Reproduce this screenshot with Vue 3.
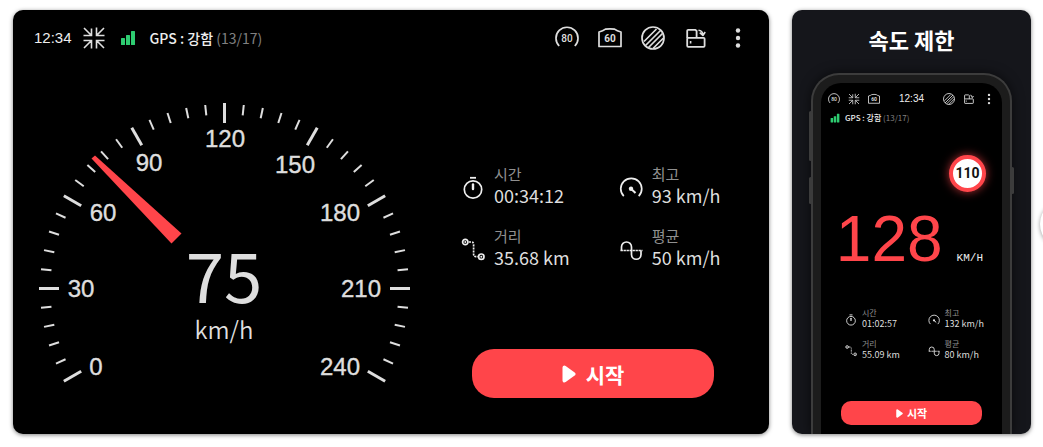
<script setup>
const majorTicks = Array.from({ length: 9 }, (_, i) => i * 30 - 120)
const minorTicks = Array.from({ length: 41 }, (_, i) => i * 6 - 120).filter((a) => a % 30 !== 0)

const gaugeLabels = [
  { value: 0, x: 96, y: 375 },
  { value: 30, x: 81, y: 297 },
  { value: 60, x: 103, y: 221 },
  { value: 90, x: 149, y: 171 },
  { value: 120, x: 225, y: 147 },
  { value: 150, x: 295, y: 173 },
  { value: 180, x: 340, y: 221 },
  { value: 210, x: 361, y: 297 },
  { value: 240, x: 340, y: 375 },
]

const landscapeStats = [
  { icon: 'timer', label: '시간', value: '00:34:12' },
  { icon: 'max', label: '최고', value: '93 km/h' },
  { icon: 'route', label: '거리', value: '35.68 km' },
  { icon: 'average', label: '평균', value: '50 km/h' },
]

const portraitStats = [
  { icon: 'timer', label: '시간', value: '01:02:57' },
  { icon: 'max', label: '최고', value: '132 km/h' },
  { icon: 'route', label: '거리', value: '55.09 km' },
  { icon: 'average', label: '평균', value: '80 km/h' },
]
</script>

<template>
  <main class="page">
    <svg class="sprite" aria-hidden="true">
      <symbol id="i-limit" viewBox="0 0 24 24">
        <path d="M4.2 20A11 11 0 1 1 19.8 20" fill="none" stroke="currentColor" stroke-width="1.7" />
      </symbol>
      <symbol id="i-camera" viewBox="0 0 24 24">
        <path d="M1 20.5V6Q5 5.2 7.5 3.2Q12 2.4 16.5 3.2Q19 5.2 23 6V20.5Z" fill="none" stroke="currentColor" stroke-width="1.7" stroke-linejoin="round" />
      </symbol>
      <symbol id="i-hatch" viewBox="0 0 24 24">
        <g fill="none" stroke="currentColor" stroke-width="1.7">
          <circle cx="12" cy="12" r="11" />
          <path d="M3 15.5L15.5 3M4 20L20 4M7.5 21.5L21.5 7.5M12 22.5L22.5 12" />
        </g>
      </symbol>
      <symbol id="i-rotate" viewBox="0 0 24 24">
        <g fill="none" stroke="currentColor" stroke-width="1.8" stroke-linejoin="round">
          <rect x="3.2" y="11.8" width="17.4" height="9" rx="1" />
          <path d="M3.2 12V4.8Q3.2 3.8 4.200 3.8H11.400L12.6 5V11.8" />
          <path d="M14.5 4.200Q18.4 4.600 18.900 8.600M15.800 6.600L18.900 9.500L21.200 6" stroke-width="1.6" />
          <path d="M6.600 15V17.500" stroke-width="1.6" />
        </g>
      </symbol>
      <symbol id="i-dots" viewBox="0 0 24 24">
        <g fill="currentColor">
          <circle cx="12" cy="3.8" r="2.4" />
          <circle cx="12" cy="12" r="2.4" />
          <circle cx="12" cy="20.2" r="2.4" />
        </g>
      </symbol>
      <symbol id="i-shrink" viewBox="0 0 24 24">
        <path d="M2 2L9 9M9.5 2.5V9.5H1.5M22 2L15 9M14.5 1.5V9.5H22.5M2 22L9 15M1.5 14.5H9.5V22.5M22 22L15 15M22.5 14.5H14.5V22.5" fill="none" stroke="currentColor" stroke-width="1.6" />
      </symbol>
      <symbol id="i-signal" viewBox="0 0 16 16">
        <g fill="#2ecc71">
          <rect x="1" y="8" width="4" height="7" rx=".5" />
          <rect x="6" y="5" width="4" height="10" rx=".5" />
          <rect x="11" y="1" width="4" height="14" rx=".5" />
        </g>
      </symbol>
      <symbol id="i-timer" viewBox="0 0 24 24">
        <g fill="none" stroke="currentColor">
          <circle cx="12" cy="13.5" r="8.7" stroke-width="1.7" />
          <path d="M9 1.8H15" stroke-width="1.8" />
          <path d="M12 8.5V13" stroke-width="2.4" stroke-linecap="round" />
        </g>
      </symbol>
      <symbol id="i-max" viewBox="0 0 24 24">
        <path d="M4.8 20.2A10.5 10.5 0 1 1 19.7 20.2" fill="none" stroke="currentColor" stroke-width="1.7" />
        <circle cx="12" cy="12.7" r="2.2" fill="currentColor" />
        <path d="M12 12.7L16.5 17" stroke="currentColor" stroke-width="2" />
      </symbol>
      <symbol id="i-route" viewBox="0 0 24 24">
        <g fill="none" stroke="currentColor" stroke-width="1.7">
          <circle cx="4.3" cy="4" r="2.7" />
          <circle cx="20.3" cy="18.700" r="2.7" />
          <path d="M8 4H10.3Q12.6 4 12.6 6.5V16Q12.6 18.700 15 18.700H17" stroke-dasharray="2 1" />
        </g>
        <circle cx="4.3" cy="4" r="1" fill="currentColor" />
        <circle cx="20.3" cy="18.700" r="1" fill="currentColor" />
      </symbol>
      <symbol id="i-average" viewBox="0 0 24 24">
        <g fill="none" stroke="currentColor" stroke-width="1.7">
          <path d="M2.500 12.5V9A5 5 0 0 1 12.5 9V16.500A4.700 4.700 0 0 0 22 16.500V12.5" />
          <path d="M1.500 12.5H23.500" stroke-dasharray="2.400 .6" />
        </g>
      </symbol>
      <symbol id="i-play" viewBox="0 0 14 18">
        <path d="M2.5 2.500L11.5 9L2.5 15.500Z" fill="currentColor" stroke="currentColor" stroke-width="4" stroke-linejoin="round" />
      </symbol>
    </svg>

    <section class="card landscape">
      <header class="bar">
        <span class="clock">12:34</span>
        <button class="tool shrink" type="button" aria-label="화면 축소"><svg><use href="#i-shrink" /></svg></button>
        <svg class="signal"><use href="#i-signal" /></svg>
        <span class="gps">GPS : 강함 <span class="count">(13/17)</span></span>
        <nav class="tools">
          <button class="tool" type="button" aria-label="속도 제한"><svg><use href="#i-limit" /></svg><span>80</span></button>
          <button class="tool cam" type="button" aria-label="카메라"><svg><use href="#i-camera" /></svg><span>60</span></button>
          <button class="tool" type="button" aria-label="테마"><svg><use href="#i-hatch" /></svg></button>
          <button class="tool" type="button" aria-label="회전"><svg><use href="#i-rotate" /></svg></button>
          <button class="tool more" type="button" aria-label="메뉴"><svg><use href="#i-dots" /></svg></button>
        </nav>
      </header>

      <div class="dash">
        <svg class="gauge" viewBox="38 102 374 282">
          <g stroke="#dedede">
            <line v-for="a in minorTicks" :key="a" x1="224.5" y1="104" x2="224.5" y2="114.5" stroke-width="2" :transform="`rotate(${a} 224.5 288.5)`" />
            <line v-for="a in majorTicks" :key="a" x1="224.5" y1="103" x2="224.5" y2="123" stroke-width="3" :transform="`rotate(${a} 224.5 288.5)`" />
          </g>
          <g class="scale">
            <text v-for="l in gaugeLabels" :key="l.value" :x="l.x" :y="l.y">{{ l.value }}</text>
          </g>
          <polygon points="91.5,158.5 95,155.5 181.5,233.5 171.5,243.5" fill="#ff454a" />
          <text class="speed" x="224" y="303">75</text>
          <text class="unit" x="224" y="339">km/h</text>
        </svg>

        <div class="side">
          <dl class="stats">
            <div v-for="s in landscapeStats" :key="s.label" class="stat">
              <svg class="stat-icon"><use :href="`#i-${s.icon}`" /></svg>
              <div>
                <dt>{{ s.label }}</dt>
                <dd>{{ s.value }}</dd>
              </div>
            </div>
          </dl>
          <button class="start" type="button"><svg><use href="#i-play" /></svg>시작</button>
        </div>
      </div>
    </section>

    <section class="card portrait">
      <h2>속도 제한</h2>
      <div class="phone">
        <i class="key key-a"></i>
        <i class="key key-b"></i>
        <i class="key key-c"></i>
        <div class="screen">
          <header class="bar">
            <button class="tool" type="button" aria-label="속도 제한"><svg><use href="#i-limit" /></svg><span>80</span></button>
            <button class="tool" type="button" aria-label="화면 축소"><svg><use href="#i-shrink" /></svg></button>
            <button class="tool cam" type="button" aria-label="카메라"><svg><use href="#i-camera" /></svg><span>60</span></button>
            <span class="clock">12:34</span>
            <button class="tool" type="button" aria-label="테마"><svg><use href="#i-hatch" /></svg></button>
            <button class="tool" type="button" aria-label="회전"><svg><use href="#i-rotate" /></svg></button>
            <button class="tool" type="button" aria-label="메뉴"><svg><use href="#i-dots" /></svg></button>
          </header>
          <p class="gps-row">
            <svg class="signal"><use href="#i-signal" /></svg>
            <span class="gps">GPS : 강함 <span class="count">(13/17)</span></span>
          </p>
          <div class="limit">110</div>
          <p class="readout"><strong>128</strong><span>KM/H</span></p>
          <dl class="stats">
            <div v-for="s in portraitStats" :key="s.label" class="stat">
              <svg class="stat-icon"><use :href="`#i-${s.icon}`" /></svg>
              <div>
                <dt>{{ s.label }}</dt>
                <dd>{{ s.value }}</dd>
              </div>
            </div>
          </dl>
          <button class="start" type="button"><svg><use href="#i-play" /></svg>시작</button>
        </div>
      </div>
    </section>

    <button class="next" type="button" aria-label="다음"></button>
  </main>
</template>

<style>
body {
  margin: 0;
  background: #fff;
}
</style>

<style scoped>
.page {
  position: relative;
  display: grid;
  grid-template-columns: 756fr 239fr;
  gap: 23px;
  padding: 10px 12px 13px 13px;
  overflow: hidden;
  color: #dedede;
  font-family: "Noto Sans CJK KR", sans-serif;
}

.page * {
  box-sizing: border-box;
}

.sprite {
  position: absolute;
  width: 0;
  height: 0;
}

button {
  padding: 0;
  border: 0;
  background: none;
  color: inherit;
  font: inherit;
}

svg {
  display: block;
}

p,
dl,
dd,
h2 {
  margin: 0;
}

.card {
  min-width: 0;
  border-radius: 10px;
  background: #000;
  box-shadow: 0 1px 4px rgba(0, 0, 0, 0.5);
}

.bar {
  display: flex;
  align-items: center;
}

.clock {
  color: #eee;
  font-family: "Liberation Sans", sans-serif;
  font-size: 15px;
  line-height: 24px;
}

.tool {
  position: relative;
  flex: none;
  width: 24px;
  height: 24px;
}

.tool svg {
  width: 100%;
  height: 100%;
}

.tool span {
  position: absolute;
  inset: 0;
  font-family: Roboto, sans-serif;
  font-size: 10px;
  font-weight: 500;
  line-height: 25px;
  text-align: center;
}

.tool.cam span {
  font-weight: 700;
}

.signal {
  flex: none;
  width: 16px;
  height: 16px;
}

.gps {
  color: #eee;
  font-size: 14px;
  font-weight: 500;
  line-height: 20px;
  white-space: nowrap;
}

.count {
  color: #808080;
  font-weight: 400;
}

.landscape .bar {
  padding: 16px 20px 0 21px;
}

.landscape .shrink {
  margin: 0 14px 0 10px;
}

.landscape .gps {
  margin-left: 14px;
}

.tools {
  display: flex;
  gap: 19px;
  margin-left: auto;
}

.landscape .more {
  width: 22px;
}

.dash {
  display: grid;
  grid-template-columns: 374fr 263fr;
  align-items: start;
  gap: 49px;
  padding: 52px 45px 36px 25px;
}

.gauge {
  width: 100%;
}

.gauge text {
  fill: #dedede;
  text-anchor: middle;
}

.scale {
  font-family: "Liberation Sans", sans-serif;
  font-size: 24px;
  stroke: #dedede;
  stroke-width: 0.4px;
}

.gauge .speed {
  font-size: 69px;
}

.gauge .unit {
  font-size: 24px;
  font-weight: 350;
}

.side {
  display: flex;
  flex-direction: column;
  padding-top: 61px;
}

.stats {
  display: grid;
  grid-template-columns: 3fr 2fr;
  row-gap: 20px;
}

.stat {
  display: flex;
  gap: 9px;
  white-space: nowrap;
}

.stat-icon {
  flex: none;
  width: 24px;
  height: 24px;
  margin-top: 13px;
  color: #eee;
}

dt {
  color: #909090;
  font-size: 15px;
  line-height: 22px;
}

dd {
  font-size: 18px;
  line-height: 20px;
}

.start {
  display: flex;
  align-items: center;
  justify-content: center;
  gap: 10px;
  height: 49px;
  margin: 82px 10px 0 11px;
  border-radius: 22px;
  background: #ff454a;
  color: #fff;
  font-size: 21px;
  font-weight: 700;
  line-height: 28px;
}

.start svg {
  width: 14px;
  height: 18px;
}

.portrait {
  display: flex;
  flex-direction: column;
  overflow: hidden;
  background: #15161b;
}

h2 {
  padding-top: 13px;
  color: #fff;
  font-size: 22px;
  font-weight: 700;
  line-height: 32px;
  text-align: center;
}

.phone {
  position: relative;
  flex: 1;
  display: flex;
  margin: 18px 19px 0;
  padding: 8px 8px 0;
  border: 2px solid #3c3c3c;
  border-bottom: 0;
  border-radius: 28px 28px 0 0;
  background: #1c1c1c;
  box-shadow: 0 0 12px rgba(0, 0, 0, 0.6);
}

.key {
  position: absolute;
  width: 3px;
  border-radius: 2px;
  background: #3c3c3c;
}

.key-a {
  top: 36px;
  left: -4px;
  height: 50px;
}

.key-b {
  top: 102px;
  left: -4px;
  height: 27px;
}

.key-c {
  top: 92px;
  right: -4px;
  height: 27px;
}

.screen {
  flex: 1;
  min-width: 0;
  border-radius: 20px 20px 0 0;
  background: #000;
}

.screen .bar {
  gap: 8px;
  padding: 10px 7px 0;
}

.screen .tool {
  width: 12px;
  height: 12px;
}

.screen .tool span {
  font-size: 5px;
  line-height: 13px;
}

.screen .clock {
  margin: 0 auto;
  font-size: 10px;
  line-height: 12px;
}

.gps-row {
  display: flex;
  align-items: center;
  gap: 5px;
  padding: 7px 9px 0;
}

.screen .signal {
  width: 10px;
  height: 10px;
}

.screen .gps {
  font-size: 8px;
  line-height: 12px;
}

.limit {
  width: 37px;
  height: 37px;
  margin: 31px 16px 0 auto;
  border: 4px solid #ff454a;
  border-radius: 50%;
  background: #fff;
  box-shadow: 0 0 10px rgba(255, 69, 74, 0.7);
  color: #111;
  font-family: Roboto, sans-serif;
  font-size: 14px;
  font-weight: 700;
  line-height: 29px;
  text-align: center;
}

.readout {
  display: flex;
  align-items: baseline;
  justify-content: flex-end;
  gap: 14px;
  padding: 17px 19px 0 0;
}

.readout strong {
  color: #ff454a;
  font-family: "Liberation Sans", sans-serif;
  font-size: 64px;
  font-weight: 400;
  line-height: 60px;
}

.readout span {
  color: #eee;
  font-family: "Liberation Mono", monospace;
  font-size: 11px;
  line-height: 12px;
}

.screen .stats {
  grid-template-columns: 82fr 60fr;
  row-gap: 10px;
  padding: 39px 14px 0 24px;
}

.screen .stat {
  gap: 5px;
}

.screen .stat-icon {
  width: 12px;
  height: 12px;
  margin-top: 6px;
}

.screen dt {
  font-size: 8px;
  line-height: 10px;
}

.screen dd {
  font-size: 9px;
  line-height: 11px;
}

.screen .start {
  gap: 4px;
  width: calc(100% - 40px);
  height: 24px;
  margin: 41px 20px 9px;
  border-radius: 10px;
  font-size: 11px;
  line-height: 16px;
}

.screen .start svg {
  width: 7px;
  height: 9px;
}

.next {
  position: absolute;
  top: 200px;
  right: -45px;
  width: 48px;
  height: 48px;
  border-radius: 50%;
  background: #fff;
  box-shadow: 0 1px 4px rgba(0, 0, 0, 0.4);
}
</style>
